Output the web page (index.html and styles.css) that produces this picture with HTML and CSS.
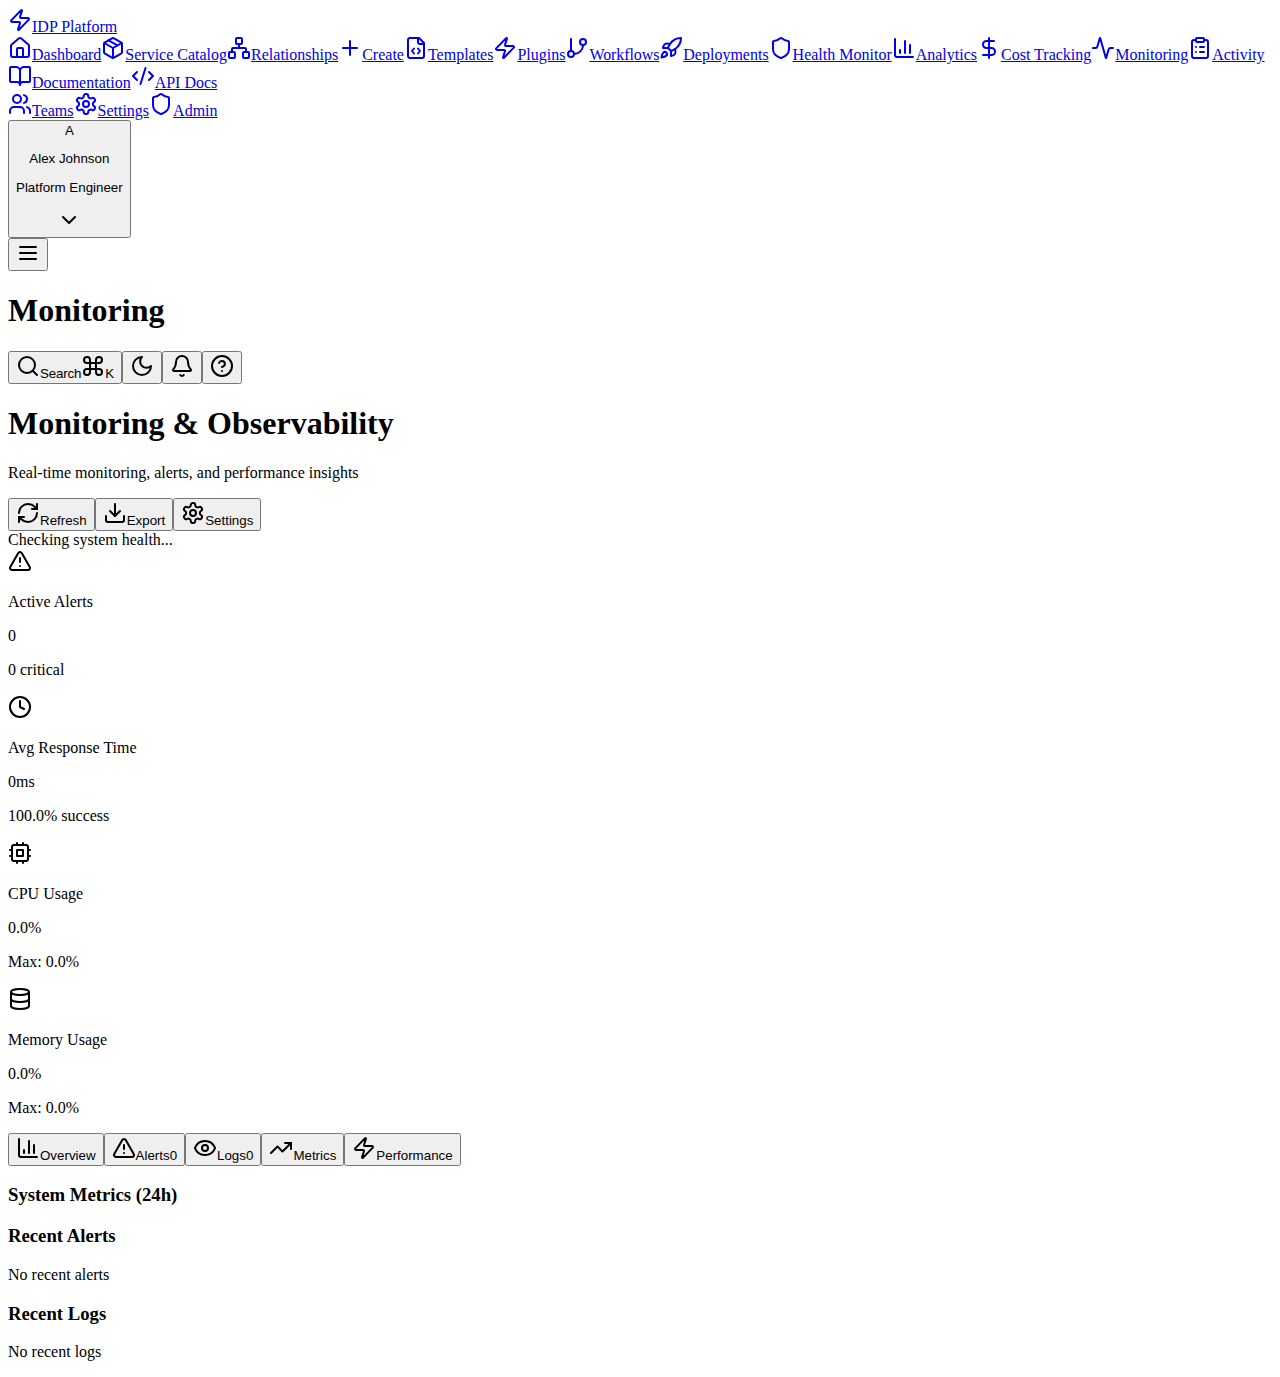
FILE: index.html
```html
<!DOCTYPE html>
<html lang="en">
<head>
<meta charset="utf-8">
<title>Monitoring</title>
<link rel="stylesheet" href="styles.css">
</head>
<body>
<svg class="sprite" xmlns="http://www.w3.org/2000/svg">
<symbol id="i-zap" viewBox="0 0 24 24"><path d="M4 14a1 1 0 0 1-.78-1.63l9.9-10.2a.5.5 0 0 1 .86.46l-1.92 6.02A1 1 0 0 0 13 10h7a1 1 0 0 1 .78 1.63l-9.9 10.2a.5.5 0 0 1-.86-.46l1.92-6.02A1 1 0 0 0 11 14z"/></symbol>
<symbol id="i-house" viewBox="0 0 24 24"><path d="M15 21v-8a1 1 0 0 0-1-1h-4a1 1 0 0 0-1 1v8"/><path d="M3 10a2 2 0 0 1 .709-1.528l7-5.999a2 2 0 0 1 2.582 0l7 5.999A2 2 0 0 1 21 10v9a2 2 0 0 1-2 2H5a2 2 0 0 1-2-2z"/></symbol>
<symbol id="i-package" viewBox="0 0 24 24"><path d="M11 21.73a2 2 0 0 0 2 0l7-4A2 2 0 0 0 21 16V8a2 2 0 0 0-1-1.73l-7-4a2 2 0 0 0-2 0l-7 4A2 2 0 0 0 3 8v8a2 2 0 0 0 1 1.73z"/><path d="M12 22V12"/><polyline points="3.29 7 12 12 20.71 7"/><path d="m7.5 4.27 9 5.15"/></symbol>
<symbol id="i-network" viewBox="0 0 24 24"><rect x="16" y="16" width="6" height="6" rx="1"/><rect x="2" y="16" width="6" height="6" rx="1"/><rect x="9" y="2" width="6" height="6" rx="1"/><path d="M5 16v-3a1 1 0 0 1 1-1h12a1 1 0 0 1 1 1v3"/><path d="M12 12V8"/></symbol>
<symbol id="i-plus" viewBox="0 0 24 24"><path d="M5 12h14"/><path d="M12 5v14"/></symbol>
<symbol id="i-file-code" viewBox="0 0 24 24"><path d="M10 12.5 8 15l2 2.5"/><path d="m14 12.5 2 2.5-2 2.5"/><path d="M14 2v4a2 2 0 0 0 2 2h4"/><path d="M15 2H6a2 2 0 0 0-2 2v16a2 2 0 0 0 2 2h12a2 2 0 0 0 2-2V7z"/></symbol>
<symbol id="i-branch" viewBox="0 0 24 24"><line x1="6" x2="6" y1="3" y2="15"/><circle cx="18" cy="6" r="3"/><circle cx="6" cy="18" r="3"/><path d="M18 9a9 9 0 0 1-9 9"/></symbol>
<symbol id="i-rocket" viewBox="0 0 24 24"><path d="M4.5 16.5c-1.5 1.26-2 5-2 5s3.74-.5 5-2c.71-.84.7-2.13-.09-2.91a2.18 2.18 0 0 0-2.91-.09z"/><path d="m12 15-3-3a22 22 0 0 1 2-3.95A12.88 12.88 0 0 1 22 2c0 2.72-.78 7.5-6 11a22.35 22.35 0 0 1-4 2z"/><path d="M9 12H4s.55-3.03 2-4c1.62-1.08 5 0 5 0"/><path d="M12 15v5s3.03-.55 4-2c1.08-1.62 0-5 0-5"/></symbol>
<symbol id="i-shield" viewBox="0 0 24 24"><path d="M20 13c0 5-3.5 7.5-7.66 8.95a1 1 0 0 1-.67-.01C7.5 20.5 4 18 4 13V6a1 1 0 0 1 1-1c2 0 4.5-1.2 6.24-2.72a1.17 1.17 0 0 1 1.52 0C14.51 3.81 17 5 19 5a1 1 0 0 1 1 1z"/></symbol>
<symbol id="i-chart" viewBox="0 0 24 24"><path d="M3 3v16a2 2 0 0 0 2 2h16"/><path d="M18 17V9"/><path d="M13 17V5"/><path d="M8 17v-3"/></symbol>
<symbol id="i-dollar" viewBox="0 0 24 24"><line x1="12" x2="12" y1="2" y2="22"/><path d="M17 5H9.5a3.5 3.5 0 0 0 0 7h5a3.5 3.5 0 0 1 0 7H6"/></symbol>
<symbol id="i-activity" viewBox="0 0 24 24"><path d="M22 12h-2.48a2 2 0 0 0-1.93 1.46l-2.35 8.36a.25.25 0 0 1-.48 0L9.24 2.18a.25.25 0 0 0-.48 0l-2.35 8.36A2 2 0 0 1 4.49 12H2"/></symbol>
<symbol id="i-clipboard" viewBox="0 0 24 24"><rect x="8" y="2" width="8" height="4" rx="1"/><path d="M16 4h2a2 2 0 0 1 2 2v14a2 2 0 0 1-2 2H6a2 2 0 0 1-2-2V6a2 2 0 0 1 2-2h2"/><path d="M12 11h4"/><path d="M12 16h4"/><path d="M8 11h.01"/><path d="M8 16h.01"/></symbol>
<symbol id="i-book" viewBox="0 0 24 24"><path d="M12 7v14"/><path d="M3 18a1 1 0 0 1-1-1V4a1 1 0 0 1 1-1h5a4 4 0 0 1 4 4 4 4 0 0 1 4-4h5a1 1 0 0 1 1 1v13a1 1 0 0 1-1 1h-6a3 3 0 0 0-3 3 3 3 0 0 0-3-3z"/></symbol>
<symbol id="i-code" viewBox="0 0 24 24"><path d="m18 16 4-4-4-4"/><path d="m6 8-4 4 4 4"/><path d="m14.5 4-5 16"/></symbol>
<symbol id="i-users" viewBox="0 0 24 24"><path d="M16 21v-2a4 4 0 0 0-4-4H6a4 4 0 0 0-4 4v2"/><circle cx="9" cy="7" r="4"/><path d="M22 21v-2a4 4 0 0 0-3-3.87"/><path d="M16 3.13a4 4 0 0 1 0 7.75"/></symbol>
<symbol id="i-settings" viewBox="0 0 24 24"><path d="M12.22 2h-.44a2 2 0 0 0-2 2v.18a2 2 0 0 1-1 1.73l-.43.25a2 2 0 0 1-2 0l-.15-.08a2 2 0 0 0-2.73.73l-.22.38a2 2 0 0 0 .73 2.73l.15.1a2 2 0 0 1 1 1.72v.51a2 2 0 0 1-1 1.74l-.15.09a2 2 0 0 0-.73 2.73l.22.38a2 2 0 0 0 2.73.73l.15-.08a2 2 0 0 1 2 0l.43.25a2 2 0 0 1 1 1.73V20a2 2 0 0 0 2 2h.44a2 2 0 0 0 2-2v-.18a2 2 0 0 1 1-1.73l.43-.25a2 2 0 0 1 2 0l.15.08a2 2 0 0 0 2.73-.73l.22-.39a2 2 0 0 0-.73-2.73l-.15-.08a2 2 0 0 1-1-1.74v-.5a2 2 0 0 1 1-1.74l.15-.09a2 2 0 0 0 .73-2.73l-.22-.38a2 2 0 0 0-2.73-.73l-.15.08a2 2 0 0 1-2 0l-.43-.25a2 2 0 0 1-1-1.73V4a2 2 0 0 0-2-2z"/><circle cx="12" cy="12" r="3"/></symbol>
<symbol id="i-chevron" viewBox="0 0 24 24"><path d="m6 9 6 6 6-6"/></symbol>
<symbol id="i-menu" viewBox="0 0 24 24"><path d="M4 12h16"/><path d="M4 6h16"/><path d="M4 18h16"/></symbol>
<symbol id="i-search" viewBox="0 0 24 24"><circle cx="11" cy="11" r="8"/><path d="m21 21-4.3-4.3"/></symbol>
<symbol id="i-command" viewBox="0 0 24 24"><path d="M15 6v12a3 3 0 1 0 3-3H6a3 3 0 1 0 3 3V6a3 3 0 1 0-3 3h12a3 3 0 1 0-3-3"/></symbol>
<symbol id="i-moon" viewBox="0 0 24 24"><path d="M12 3a6 6 0 0 0 9 9 9 9 0 1 1-9-9Z"/></symbol>
<symbol id="i-bell" viewBox="0 0 24 24"><path d="M10.268 21a2 2 0 0 0 3.464 0"/><path d="M3.262 15.326A1 1 0 0 0 4 17h16a1 1 0 0 0 .74-1.673C19.41 13.956 18 12.499 18 8A6 6 0 0 0 6 8c0 4.499-1.411 5.956-2.738 7.326"/></symbol>
<symbol id="i-help" viewBox="0 0 24 24"><circle cx="12" cy="12" r="10"/><path d="M9.09 9a3 3 0 0 1 5.83 1c0 2-3 3-3 3"/><path d="M12 17h.01"/></symbol>
<symbol id="i-refresh" viewBox="0 0 24 24"><path d="M3 12a9 9 0 0 1 9-9 9.75 9.75 0 0 1 6.74 2.74L21 8"/><path d="M21 3v5h-5"/><path d="M21 12a9 9 0 0 1-9 9 9.75 9.75 0 0 1-6.74-2.74L3 16"/><path d="M8 16H3v5"/></symbol>
<symbol id="i-download" viewBox="0 0 24 24"><path d="M21 15v4a2 2 0 0 1-2 2H5a2 2 0 0 1-2-2v-4"/><polyline points="7 10 12 15 17 10"/><line x1="12" x2="12" y1="15" y2="3"/></symbol>
<symbol id="i-alert" viewBox="0 0 24 24"><path d="m21.73 18-8-14a2 2 0 0 0-3.48 0l-8 14A2 2 0 0 0 4 21h16a2 2 0 0 0 1.73-3"/><path d="M12 9v4"/><path d="M12 17h.01"/></symbol>
<symbol id="i-clock" viewBox="0 0 24 24"><circle cx="12" cy="12" r="10"/><polyline points="12 6 12 12 16 14"/></symbol>
<symbol id="i-cpu" viewBox="0 0 24 24"><rect x="4" y="4" width="16" height="16" rx="2"/><rect x="9" y="9" width="6" height="6"/><path d="M15 2v2"/><path d="M15 20v2"/><path d="M2 15h2"/><path d="M2 9h2"/><path d="M20 15h2"/><path d="M20 9h2"/><path d="M9 2v2"/><path d="M9 20v2"/></symbol>
<symbol id="i-database" viewBox="0 0 24 24"><ellipse cx="12" cy="5" rx="9" ry="3"/><path d="M3 5V19A9 3 0 0 0 21 19V5"/><path d="M3 12A9 3 0 0 0 21 12"/></symbol>
<symbol id="i-eye" viewBox="0 0 24 24"><path d="M2.062 12.348a1 1 0 0 1 0-.696 10.75 10.75 0 0 1 19.876 0 1 1 0 0 1 0 .696 10.75 10.75 0 0 1-19.876 0"/><circle cx="12" cy="12" r="3"/></symbol>
<symbol id="i-trending" viewBox="0 0 24 24"><polyline points="22 7 13.5 15.5 8.5 10.5 2 17"/><polyline points="16 7 22 7 22 13"/></symbol>
</svg>

<aside>
<div><a href="#"><svg class="icon"><use href="#i-zap"/></svg><span>IDP Platform</span></a></div>
<nav>
<div><a href="#"><svg class="icon"><use href="#i-house"/></svg><span>Dashboard</span></a><a href="#"><svg class="icon"><use href="#i-package"/></svg><span>Service Catalog</span></a><a href="#"><svg class="icon"><use href="#i-network"/></svg><span>Relationships</span></a><a href="#"><svg class="icon"><use href="#i-plus"/></svg><span>Create</span></a><a href="#"><svg class="icon"><use href="#i-file-code"/></svg><span>Templates</span></a><a href="#"><svg class="icon"><use href="#i-zap"/></svg><span>Plugins</span></a><a href="#"><svg class="icon"><use href="#i-branch"/></svg><span class="label-workflows">Workflows</span></a><a href="#"><svg class="icon"><use href="#i-rocket"/></svg><span>Deployments</span></a><a href="#"><svg class="icon"><use href="#i-shield"/></svg><span>Health Monitor</span></a><a href="#"><svg class="icon"><use href="#i-chart"/></svg><span>Analytics</span></a><a href="#"><svg class="icon"><use href="#i-dollar"/></svg><span>Cost Tracking</span></a><a href="#"><svg class="icon"><use href="#i-activity"/></svg><span>Monitoring</span></a><a href="#"><svg class="icon"><use href="#i-clipboard"/></svg><span>Activity</span></a></div>
<div><a href="#"><svg class="icon"><use href="#i-book"/></svg><span>Documentation</span></a><a href="#"><svg class="icon"><use href="#i-code"/></svg><span>API Docs</span></a></div>
<div><a href="#"><svg class="icon"><use href="#i-users"/></svg><span>Teams</span></a><a href="#"><svg class="icon"><use href="#i-settings"/></svg><span>Settings</span></a><a href="#"><svg class="icon"><use href="#i-shield"/></svg><span>Admin</span></a></div>
</nav>
<div><button type="button"><div>A</div><div><p>Alex Johnson</p><p>Platform Engineer</p></div><svg class="icon"><use href="#i-chevron"/></svg></button></div>
</aside>

<header>
<div><button type="button"><svg class="icon"><use href="#i-menu"/></svg></button></div>
<h1>Monitoring</h1>
<div><button type="button"><svg class="icon"><use href="#i-search"/></svg><span class="label-search">Search</span><svg class="icon"><use href="#i-command"/></svg><span>K</span></button><button type="button"><svg class="icon"><use href="#i-moon"/></svg></button><button type="button"><svg class="icon"><use href="#i-bell"/></svg></button><button type="button"><svg class="icon"><use href="#i-help"/></svg></button></div>
</header>

<main>
<h1>Monitoring &amp; Observability</h1>
<p>Real-time monitoring, alerts, and performance insights</p>
<div><button type="button"><svg class="icon"><use href="#i-refresh"/></svg><span>Refresh</span></button><button type="button"><svg class="icon"><use href="#i-download"/></svg><span>Export</span></button><button type="button"><svg class="icon"><use href="#i-settings"/></svg><span>Settings</span></button></div>
<div>Checking system health...</div>

<section>
<div><svg class="icon"><use href="#i-alert"/></svg></div>
<p>Active Alerts</p>
<p>0</p>
<p>0 critical</p>
</section>
<section>
<div><svg class="icon"><use href="#i-clock"/></svg></div>
<p>Avg Response Time</p>
<p>0ms</p>
<p>100.0% success</p>
</section>
<section>
<div><svg class="icon"><use href="#i-cpu"/></svg></div>
<p>CPU Usage</p>
<p>0.0%</p>
<p>Max: 0.0%</p>
</section>
<section>
<div><svg class="icon"><use href="#i-database"/></svg></div>
<p>Memory Usage</p>
<p>0.0%</p>
<p>Max: 0.0%</p>
</section>

<div><button type="button"><svg class="icon"><use href="#i-chart"/></svg><span>Overview</span></button><button type="button"><svg class="icon"><use href="#i-alert"/></svg><span>Alerts</span><span>0</span></button><button type="button"><svg class="icon"><use href="#i-eye"/></svg><span>Logs</span><span>0</span></button><button type="button"><svg class="icon"><use href="#i-trending"/></svg><span>Metrics</span></button><button type="button"><svg class="icon"><use href="#i-zap"/></svg><span>Performance</span></button></div>

<h3>System Metrics (24h)</h3>
<h3>Recent Alerts</h3>
<p>No recent alerts</p>
<h3>Recent Logs</h3>
<p>No recent logs</p>
</main>
</body>
</html>
```

FILE: styles.css
```css
body {
  font-family: "Liberation Serif", "Times New Roman", serif;
  color: #000;
  background: #fff;
}

button {
  font-family: "Liberation Sans", Arial, sans-serif;
}

.label-workflows {
  letter-spacing: -0.1px;
}

.label-search {
  letter-spacing: -0.15px;
}

.sprite {
  display: none;
}

.icon {
  width: 24px;
  height: 24px;
  fill: none;
  stroke: currentColor;
  stroke-width: 2;
  stroke-linecap: round;
  stroke-linejoin: round;
}
```
